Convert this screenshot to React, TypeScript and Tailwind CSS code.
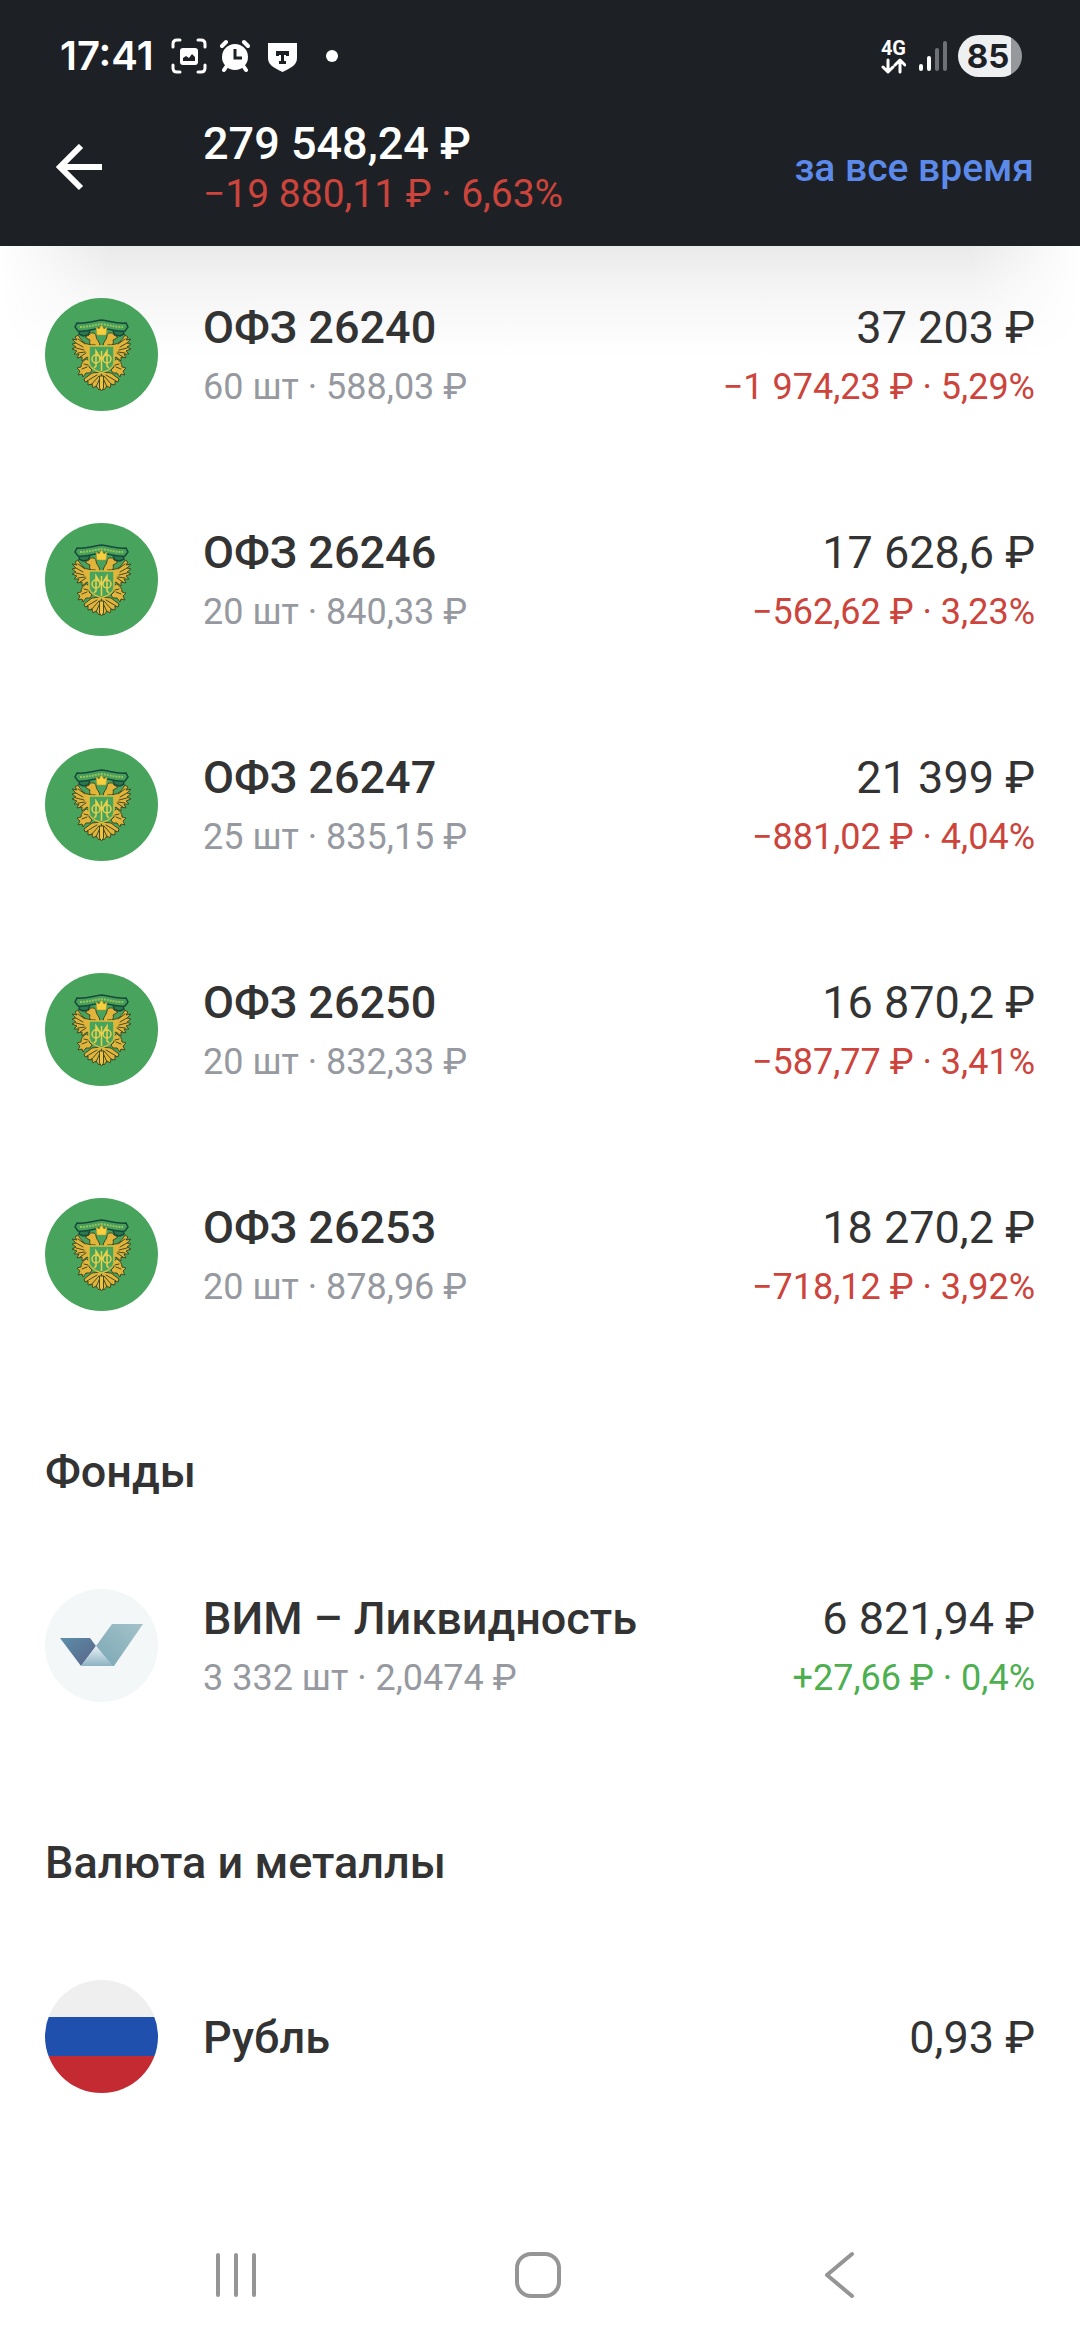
import cn from "clsx";

interface Holding {
  name: string;
  details?: string;
  total: string;
  change?: string;
  up?: boolean;
}

const bonds: Holding[] = [
  { name: "ОФЗ 26240", details: "60 шт · 588,03 ₽", total: "37 203 ₽", change: "−1 974,23 ₽ · 5,29%" },
  { name: "ОФЗ 26246", details: "20 шт · 840,33 ₽", total: "17 628,6 ₽", change: "−562,62 ₽ · 3,23%" },
  { name: "ОФЗ 26247", details: "25 шт · 835,15 ₽", total: "21 399 ₽", change: "−881,02 ₽ · 4,04%" },
  { name: "ОФЗ 26250", details: "20 шт · 832,33 ₽", total: "16 870,2 ₽", change: "−587,77 ₽ · 3,41%" },
  { name: "ОФЗ 26253", details: "20 шт · 878,96 ₽", total: "18 270,2 ₽", change: "−718,12 ₽ · 3,92%" },
];

const fund: Holding = {
  name: "ВИМ – Ликвидность",
  details: "3 332 шт · 2,0474 ₽",
  total: "6 821,94 ₽",
  change: "+27,66 ₽ · 0,4%",
  up: true,
};

const rouble: Holding = { name: "Рубль", total: "0,93 ₽" };

function StatusBar() {
  return (
    <div className="flex h-28 items-center justify-between pr-[58px] pl-[60px] text-white">
      <div className="flex items-center">
        <span className="w-[111px] font-[Inter,sans-serif] text-[40px] leading-[42px] font-semibold">17:41</span>
        <svg className="size-9" viewBox="0 0 36 36" fill="none" stroke="currentColor" strokeWidth="3" strokeLinecap="round">
          <path d="M2 9V6q0-4 4-4h3M27 2h3q4 0 4 4v3M34 27v3q0 4-4 4h-3M9 34H6q-4 0-4-4v-3" />
          <rect x="9" y="10" width="18" height="17" rx="3" fill="currentColor" stroke="none" />
          <path d="M12 23v-3l3-2 3 2 3-4 3 3v4z" fill="#1d2126" stroke="none" />
        </svg>
        <svg className="ml-[13px] h-9 w-[30px]" viewBox="0 0 30 36" fill="currentColor">
          <circle cx="15" cy="19" r="13" />
          <path d="M2 8l4-4M28 8l-4-4M6 29l-2 3M24 29l2 3" stroke="currentColor" strokeWidth="4" strokeLinecap="round" />
          <path d="M15 11v9h7" fill="none" stroke="#1d2126" strokeWidth="3" />
        </svg>
        <svg className="ml-[18px] h-9 w-[30px]" viewBox="0 0 30 36" fill="currentColor">
          <path d="M0 5h29v15c0 6-4 9-14.500 14C4 29 0 26 0 20z" />
          <path d="M8 13h13v5h-3v-1h-2v6h2v3h-7v-3h2v-6h-2v1H8z" fill="#1d2126" />
        </svg>
        <span className="ml-7 size-3 rounded-full bg-white" />
      </div>
      <div className="flex items-center">
        <div className="flex flex-col items-center">
          <span className="font-[Roboto,sans-serif] text-[20px] leading-5 font-bold">4G</span>
          <svg className="h-4 w-[25px]" viewBox="0 0 25 16" fill="none" stroke="currentColor" strokeWidth="3" strokeLinecap="round" strokeLinejoin="round">
            <path d="M7 2v11M2 9l5 5 5-5M19 14V3M14 7l5-5 5 5" />
          </svg>
        </div>
        <svg className="ml-[13px] h-[30px] w-7" viewBox="0 0 28 30" stroke="currentColor" strokeWidth="4" strokeLinecap="round">
          <path d="M2 25v3M10 17v11" />
          <path d="M18 9v19M26 2v26" opacity=".36" />
        </svg>
        <span className="ml-[11px] h-[42px] w-16 rounded-full bg-linear-to-r from-[#eeeff0] from-83% to-[#96989b] to-83% pr-1 text-center font-[Inter,sans-serif] text-[33px] leading-[43px] font-bold text-[#1d2126]">
          85
        </span>
      </div>
    </div>
  );
}

function EagleHalf({ flip }: { flip?: boolean }) {
  return (
    <g
      transform={flip ? "matrix(-1 0 0 1 113 0)" : undefined}
      stroke="#3f4a26"
      fill="#e2b53a"
      strokeLinejoin="round"
      strokeLinecap="round"
    >
      {/* head and neck */}
      <path d="M55 48c0-5-4-6-4-10 0-4-6-4-7-1l-4 2 3 2 2 1c-1 3 0 5 3 7z" />
      {/* wing */}
      <path d="M50 47c-5 0-9-1-12-3-1-2-3-3-5-7l-3 2 2 3-5-1 4 4-4 1 4 3-4 2 5 2-3 3 5 0-2 4 5-1 0 4 5-4 3 2 0-9z" />
      <path d="M31 45l7 4M31 50l8 2M33 55l7-1M35 59l6-4M33 41l7 5" fill="none" />
      {/* leg */}
      <path d="M41 61c-3 2-5 4-5 8l-4 1 3 3-2 4 4-1 1 3 3-4 4 0 2-3-3-3 1-5z" />
      <path d="M37 71l5-2M39 66l4 1" fill="none" />
      {/* tail */}
      <path d="M56 74l-9 1-8 6 1 3 3-1 0 4 4-1 1 4 3-2 3 4 2-2z" />
      <path d="M52 77l-10 6M54 78l-8 9M55 80l-4 9" fill="none" />
    </g>
  );
}

function Emblem() {
  return (
    <svg className="size-[113px] shrink-0" viewBox="0 0 113 113" role="img" aria-label="Минфин">
      <circle cx="56.500" cy="56.500" r="56.500" fill="#48a45d" />
      <path d="M35 32l-1 4 4 2 5-1 2-4M78 32l1 4-4 2-5-1-2-4" fill="#2b7a4b" stroke="#17483b" strokeWidth="1.500" />
      <EagleHalf />
      <EagleHalf flip />
      <path
        d="M32 25c9 1 16-2 24.500-3 8.500 1 15.500 4 24.500 3l2 4-3 4c-9 1-15-2-23.500-3C48 31 42 34 33 33l-3-4z"
        fill="#45a05a"
        stroke="#17483b"
        strokeWidth="1.500"
      />
      <path d="M35 29c8 0 14-2 21.500-3 7.500 1 13.500 3 21.500 3" fill="none" stroke="#9cc25e" strokeWidth="2" strokeDasharray="2 1" />
      <path d="M51 29l3 2 2.500-4 2.500 4 3-2-1 8h-9z" fill="#f8cf3e" stroke="#b58f2c" strokeWidth=".5" />
      <path d="M44 48h25v17q-1 6-12.500 10Q45 71 44 65z" fill="#48a45d" stroke="#d9bd3e" strokeWidth="1.500" />
      <g fill="none" stroke="#ecd04a" strokeWidth="1.500">
        <path d="M49 70l2-2V53l5.500 9 5.500-9v15l2 2M56.500 53v20" />
        <circle cx="51" cy="61" r="4" />
        <circle cx="62" cy="61" r="4" />
      </g>
      <path d="M54.500 78h4v12l-2 3-2-3z" fill="#edc43b" stroke="#3f4a26" />
    </svg>
  );
}

function VimLogo() {
  return (
    <svg className="size-[113px] shrink-0" viewBox="0 0 113 113" role="img" aria-label="ВИМ">
      <defs>
        <linearGradient id="vimLeft" x1="0" y1="0" x2="1" y2="1">
          <stop stopColor="#5b8eaa" />
          <stop offset="1" stopColor="#5b6387" />
        </linearGradient>
        <linearGradient id="vimRight" x1="1" y1="0" x2="0" y2="1">
          <stop stopColor="#a5c3ca" />
          <stop offset="1" stopColor="#7aa7b5" />
        </linearGradient>
        <linearGradient id="vimMid" x1="0" y1="0" x2="0" y2="1">
          <stop stopColor="#e8f0f4" />
          <stop offset="1" stopColor="#8db3c3" />
        </linearGradient>
      </defs>
      <circle cx="56.500" cy="56.500" r="56.500" fill="#f3f7f8" />
      <path d="M15 49h30l6 8-15 20z" fill="url(#vimLeft)" />
      <path d="M67 35h31L69 77h-2L51 57z" fill="url(#vimRight)" />
      <path d="M51 57l17 20H36z" fill="url(#vimMid)" />
    </svg>
  );
}

function Flag() {
  return (
    <div className="flex size-[113px] shrink-0 flex-col overflow-hidden rounded-full">
      <div className="h-[37px] bg-[#efefef]" />
      <div className="h-[39px] bg-[#1f50ae]" />
      <div className="h-[37px] bg-[#c42a31]" />
    </div>
  );
}

function HoldingRow({ item, icon }: { item: Holding; icon: React.ReactNode }) {
  return (
    <div className="flex h-[113px] items-center">
      {icon}
      <div className="ml-[45px] flex-1 pt-0.5">
        <p className="text-[45px] leading-[62px] font-medium text-[#333333]">{item.name}</p>
        {item.details && <p className="text-[36px] leading-[56px] text-[#9699a0]">{item.details}</p>}
      </div>
      <div className="pt-0.5 text-right">
        <p className="text-[45px] leading-[62px] text-[#333333]">{item.total}</p>
        {item.change && (
          <p className={cn("text-[36px] leading-[56px]", item.up ? "text-[#4daf50]" : "text-[#cc443b]")}>
            {item.change}
          </p>
        )}
      </div>
    </div>
  );
}

function NavBar() {
  return (
    <nav className="flex h-[130px] items-center justify-around pr-[90px] pl-[86px] text-[#959595]">
      <button aria-label="Недавние">
        <svg className="h-12 w-[42px]" viewBox="0 0 42 48" stroke="currentColor" strokeWidth="4" strokeLinecap="round">
          <path d="M3 4v40M21 4v40M39 4v40" />
        </svg>
      </button>
      <button aria-label="Домой">
        <svg className="size-12" viewBox="0 0 48 48" fill="none" stroke="currentColor" strokeWidth="4">
          <rect x="3" y="3" width="42" height="42" rx="14" />
        </svg>
      </button>
      <button aria-label="Назад">
        <svg className="h-12 w-[42px]" viewBox="0 0 42 48" fill="none" stroke="currentColor" strokeWidth="4" strokeLinecap="round" strokeLinejoin="round">
          <path d="M33 3L8 24l25 21" />
        </svg>
      </button>
    </nav>
  );
}

function App() {
  return (
    <div className="flex min-h-screen flex-col bg-white font-[Roboto,sans-serif]">
      <header className="bg-[#1d2126]">
        <StatusBar />
        <div className="flex h-[134px] items-center pr-[46px] pb-[22px] pl-[56px]">
          <button aria-label="Назад" className="text-white">
            <svg className="h-12 w-[47px]" viewBox="0 0 47 48" fill="none" stroke="currentColor" strokeWidth="6">
              <path d="M46 23H5M25 2L4 23l21 21" />
            </svg>
          </button>
          <div className="ml-[100px] flex-1">
            <h1 className="text-[45px] leading-[52px] font-medium text-white">279 548,24 ₽</h1>
            <p className="text-[39px] leading-[48px] text-[#cc443b]">−19 880,11 ₽ · 6,63%</p>
          </div>
          <button className="text-[39px] leading-[48px] font-medium text-[#5c8aea]">за все время</button>
        </div>
      </header>
      <main className="flex-1 bg-[linear-gradient(to_right,white,transparent_110px,transparent_calc(100%-110px),white),linear-gradient(to_bottom,#eaeaea,#f5f5f5_45px,white_110px)] px-[45px] pt-[52px]">
        <section className="flex flex-col gap-28">
          {bonds.map((item) => (
            <HoldingRow key={item.name} item={item} icon={<Emblem />} />
          ))}
        </section>
        <section>
          <h2 className="mt-[130px] mb-[86px] text-[45px] leading-[62px] font-medium text-[#333333]">Фонды</h2>
          <HoldingRow item={fund} icon={<VimLogo />} />
        </section>
        <section>
          <h2 className="mt-[130px] mb-[86px] text-[45px] leading-[62px] font-medium text-[#333333]">Валюта и металлы</h2>
          <HoldingRow item={rouble} icon={<Flag />} />
        </section>
      </main>
      <NavBar />
    </div>
  );
}

export default App;
